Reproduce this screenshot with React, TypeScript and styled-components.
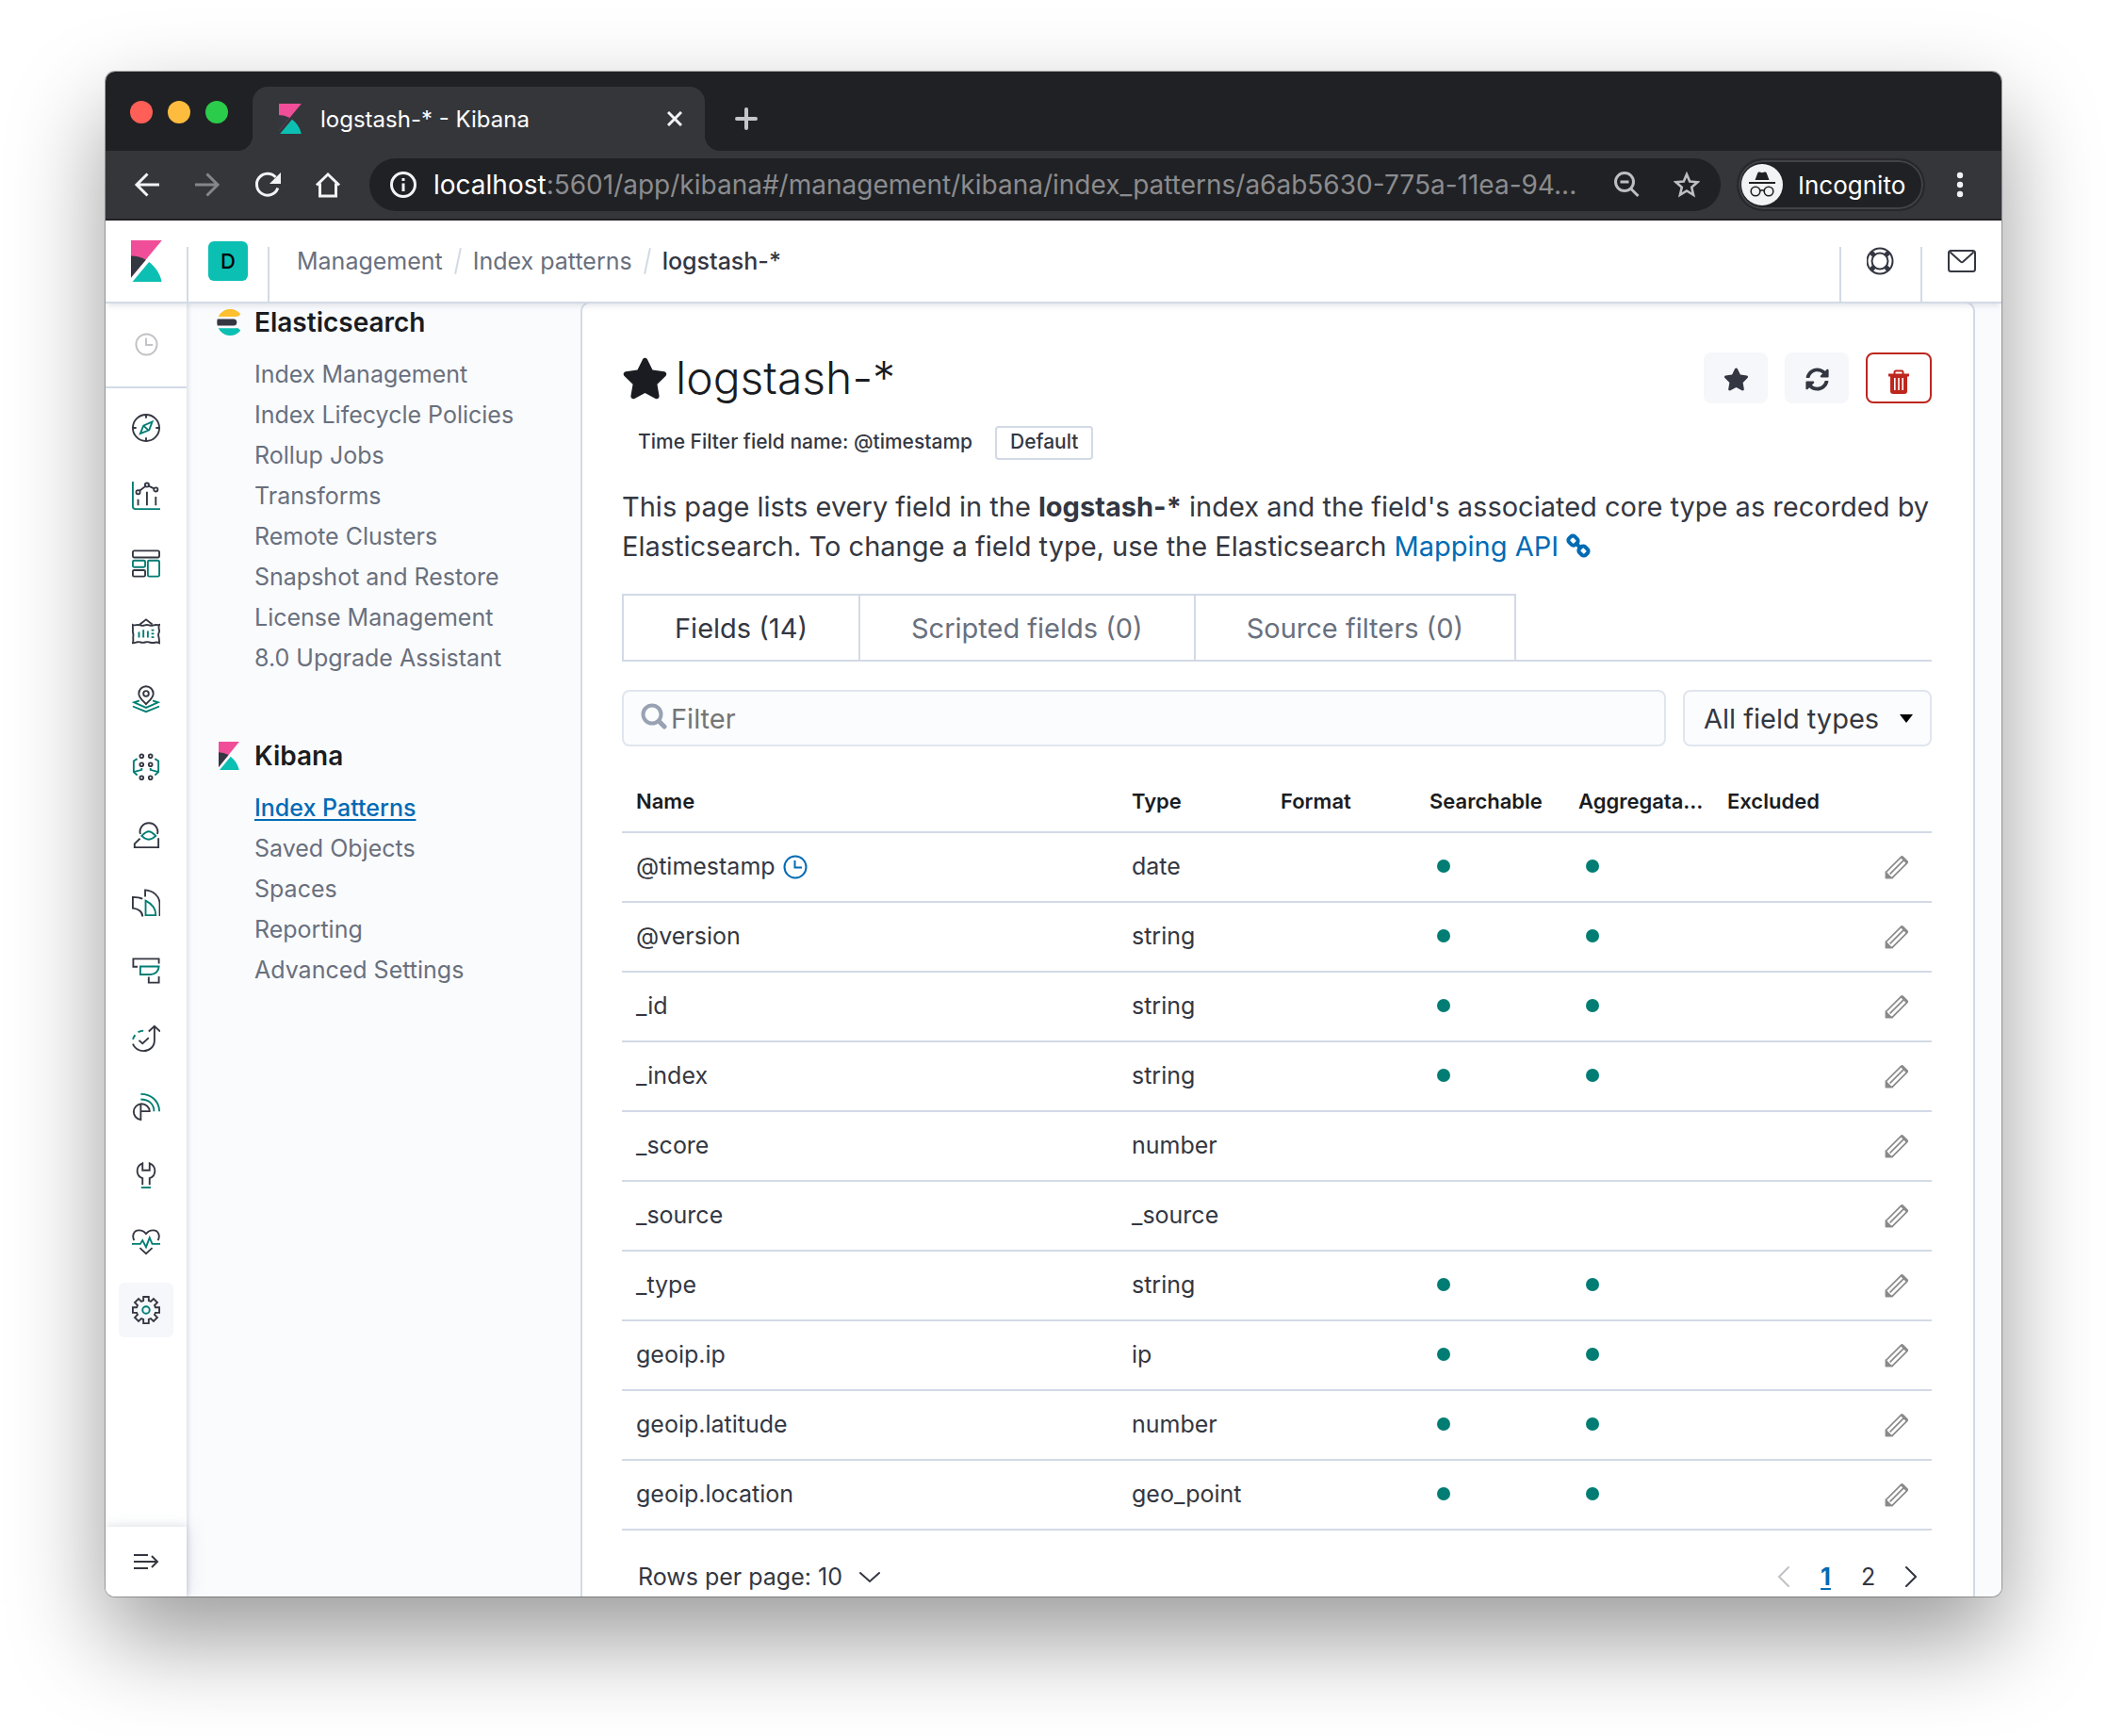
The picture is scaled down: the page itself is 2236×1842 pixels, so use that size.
import React from "react";
import styled, { createGlobalStyle, css } from "styled-components";
import { FaStar, FaSyncAlt } from "react-icons/fa";

const color = {
  ink: "#1a1c21",
  text: "#343741",
  subdued: "#69707d",
  border: "#d3dae6",
  page: "#fafbfd",
  shade: "#f5f7fa",
  teal: "#017d73",
  link: "#006bb4",
  danger: "#bd271e",
  strip: "#202124",
  toolbar: "#35363a",
};

const GlobalStyle = createGlobalStyle`
  *, *::before, *::after { box-sizing: border-box; }
  body {
    margin: 0;
    background: #fff;
    color: ${color.text};
    font-family: Inter, "Liberation Sans", sans-serif;
    font-size: 25px;
  }
  button, input, select { font: inherit; color: inherit; }
  button { padding: 0; border: 0; background: none; cursor: pointer; }
  a { color: inherit; text-decoration: none; }
  ul { margin: 0; padding: 0; list-style: none; }
  svg { display: block; flex: none; }
`;

/* ---------- Browser frame ---------- */

const Desktop = styled.div`
  display: flex;
  height: 100vh;
  padding: 76px 112px 148px;
  overflow: hidden;
`;

const Window = styled.div`
  display: flex;
  flex-direction: column;
  flex: 1;
  min-width: 0;
  overflow: hidden;
  border-radius: 10px;
  background: #fff;
  box-shadow: 0 0 0 1px rgba(0, 0, 0, 0.28), 0 44px 100px rgba(0, 0, 0, 0.4);
`;

const TabStrip = styled.div`
  display: flex;
  align-items: center;
  flex: none;
  height: 84px;
  padding-left: 26px;
  background: ${color.strip};
`;

const Lights = styled.div`
  display: flex;
  gap: 16px;
  margin-right: 26px;
  padding-top: 2px;
`;

const Light = styled.button<{ $fill: string }>`
  width: 24px;
  height: 24px;
  border-radius: 50%;
  background: ${(p) => p.$fill};
`;

const BrowserTab = styled.div`
  position: relative;
  display: flex;
  align-items: center;
  align-self: flex-end;
  gap: 20px;
  width: 480px;
  height: 68px;
  padding: 0 24px 0 28px;
  border-radius: 16px 16px 0 0;
  background: ${color.toolbar};
  color: #fff;
  font-size: 24px;

  &::before,
  &::after {
    content: "";
    position: absolute;
    bottom: 0;
    width: 16px;
    height: 16px;
  }
  &::before {
    right: 100%;
    background: radial-gradient(circle at 0 0, transparent 16px, ${color.toolbar} 16px);
  }
  &::after {
    left: 100%;
    background: radial-gradient(circle at 100% 0, transparent 16px, ${color.toolbar} 16px);
  }
`;

const TabTitle = styled.span`
  flex: 1;
  white-space: nowrap;
`;

const NewTab = styled.button`
  display: flex;
  align-items: center;
  align-self: flex-end;
  height: 68px;
  margin-left: 32px;
  color: #c4c6ca;
`;

const Toolbar = styled.div`
  display: flex;
  align-items: center;
  flex: none;
  height: 74px;
  padding: 0 40px 0 30px;
  border-bottom: 2px solid #232327;
  background: ${color.toolbar};
  color: #f1f3f4;
`;

const NavButtons = styled.div`
  display: flex;
  gap: 36px;
  margin-right: 30px;
`;

const ChromeButton = styled.button<{ $muted?: boolean }>`
  color: ${(p) => (p.$muted ? "#85868a" : "#f1f3f4")};
`;

const AddressBar = styled.div`
  display: flex;
  align-items: center;
  flex: 1;
  min-width: 0;
  height: 56px;
  padding: 0 22px;
  border-radius: 28px;
  background: ${color.strip};
`;

const Address = styled.span`
  flex: 1;
  min-width: 0;
  margin: 0 36px 0 18px;
  overflow: hidden;
  white-space: nowrap;
  color: #8b8c8f;
  font-size: 28px;
`;

const Host = styled.span`
  color: #fff;
`;

const AddressActions = styled.div`
  display: flex;
  gap: 36px;
`;

const Incognito = styled.button`
  display: flex;
  align-items: center;
  gap: 16px;
  width: 200px;
  height: 56px;
  margin: 0 33px 0 17px;
  padding-left: 3px;
  border: 2px solid #28282c;
  border-radius: 28px;
  background: ${color.strip};
  box-shadow: inset 0 0 0 2px #424347;
  color: #fff;
  font-size: 26px;
`;

/* ---------- Kibana chrome ---------- */

const Header = styled.header`
  position: relative;
  z-index: 1;
  display: flex;
  align-items: center;
  flex: none;
  height: 88px;
  border-bottom: 2px solid ${color.border};
  background: #fff;
  box-shadow: 0 4px 6px -2px rgba(152, 162, 179, 0.3);
`;

const HeaderCell = styled.button<{ $wide?: boolean }>`
  display: flex;
  align-items: center;
  justify-content: center;
  width: ${(p) => (p.$wide ? 86 : 84)}px;
  height: 100%;
  color: ${color.text};
`;

const Divider = styled.span`
  align-self: flex-end;
  width: 2px;
  height: 58px;
  background: ${color.border};
`;

const SpaceAvatar = styled.span`
  width: 42px;
  height: 42px;
  border-radius: 6px;
  background: #0cbfb3;
  color: #000;
  font-size: 22px;
  font-weight: 500;
  line-height: 42px;
  text-align: center;
`;

const Breadcrumbs = styled.nav`
  display: flex;
  align-items: center;
  flex: 1;
  gap: 15px;
  padding-left: 29px;
  color: ${color.subdued};
  white-space: nowrap;
`;

const Slash = styled.span`
  width: 2px;
  height: 28px;
  background: ${color.border};
  transform: rotate(12deg);
`;

const CurrentCrumb = styled.span`
  color: ${color.text};
  font-weight: 500;
`;

const Body = styled.div`
  display: flex;
  flex: 1;
  min-height: 0;
  background: ${color.page};
`;

const Rail = styled.nav`
  display: flex;
  flex-direction: column;
  flex: none;
  width: 86px;
  background: #fff;
  box-shadow: 2px 0 4px rgba(152, 162, 179, 0.3);
`;

const RailRecent = styled.button`
  display: flex;
  align-items: center;
  justify-content: center;
  height: 90px;
  padding-bottom: 2px;
  border-bottom: 2px solid ${color.border};
  color: #c2c3c6;
`;

const RailList = styled.ul`
  display: flex;
  flex-direction: column;
  align-items: center;
  gap: 14px;
  padding-top: 13px;
`;

const RailButton = styled.button<{ $active?: boolean }>`
  display: flex;
  align-items: center;
  justify-content: center;
  width: 58px;
  height: 58px;
  border-radius: 6px;
  background: ${(p) => (p.$active ? color.shade : "transparent")};
`;

const RailExpand = styled.button`
  display: flex;
  align-items: center;
  justify-content: center;
  height: 74px;
  margin-top: auto;
  background: #fff;
  box-shadow: 0 -2px 6px rgba(152, 162, 179, 0.15), 4px 0 16px rgba(152, 162, 179, 0.2);
`;

const SideNav = styled.nav`
  display: flex;
  flex-direction: column;
  flex: none;
  gap: 62px;
  width: 418px;
  padding-left: 32px;
`;

const SideHeading = styled.h2`
  display: flex;
  align-items: center;
  gap: 14px;
  margin: 0 0 14px;
  color: ${color.ink};
  font-size: 28px;
  font-weight: 600;
  line-height: 40px;
`;

const LogoSlot = styled.span`
  display: flex;
  justify-content: center;
  width: 26px;
`;

const SideList = styled.ul`
  padding-left: 40px;
`;

const SideLink = styled.a<{ $active?: boolean }>`
  display: block;
  color: ${color.subdued};
  line-height: 43px;
  ${(p) =>
    p.$active &&
    css`
      color: ${color.link};
      font-weight: 500;
      text-decoration: underline;
      text-decoration-thickness: 2px;
      text-underline-offset: 3px;
    `}
`;

/* ---------- Index pattern page ---------- */

const Panel = styled.main`
  flex: 1;
  min-width: 0;
  margin: -2px 28px 0 0;
  padding: 52px 44px 0 42px;
  border: 2px solid ${color.border};
  border-bottom: 0;
  border-radius: 10px 10px 0 0;
  background: #fff;
  overflow: hidden;
`;

const TitleRow = styled.div`
  display: flex;
  align-items: center;
  height: 54px;
  gap: 18px;
`;

const Title = styled.h1`
  display: flex;
  align-items: center;
  flex: 1;
  gap: 8px;
  margin: 0;
  color: ${color.ink};
  font-size: 48px;
  font-weight: 300;
  line-height: 54px;
`;

const IconButton = styled.button<{ $danger?: boolean }>`
  display: flex;
  align-items: center;
  justify-content: center;
  width: 68px;
  height: 54px;
  padding-top: 3px;
  border-radius: 8px;
  background: ${color.shade};
  color: ${color.text};
  ${(p) =>
    p.$danger &&
    css`
      width: 70px;
      padding-top: 8px;
      border: 2px solid ${color.danger};
      background: #fff;
      color: ${color.danger};
    `}
`;

const MetaRow = styled.div`
  display: flex;
  align-items: center;
  gap: 24px;
  margin-top: 24px;
  padding-left: 17px;
  font-size: 21px;
  font-weight: 500;
  line-height: 30px;
`;

const MetaText = styled.span`
  padding-bottom: 2px;
`;

const Badge = styled.span`
  padding: 0 14px 2px;
  border: 2px solid ${color.border};
  border-radius: 4px;
`;

const Intro = styled.p`
  margin: 29px 0;
  font-size: 29px;
  line-height: 42px;
`;

const DocLink = styled.a`
  color: ${color.link};

  svg {
    display: inline-block;
    vertical-align: -2px;
  }
`;

const Tabs = styled.div`
  display: flex;
  height: 72px;
  border-bottom: 2px solid ${color.border};
`;

const TabButton = styled.button<{ $active?: boolean }>`
  padding: 0 54px;
  border-top: 2px solid ${color.border};
  border-right: 2px solid ${color.border};
  color: ${(p) => (p.$active ? color.text : color.subdued)};
  font-size: 29px;

  &:first-child {
    border-left: 2px solid ${color.border};
  }
`;

const Filters = styled.form`
  display: flex;
  gap: 18px;
  margin: 30px 0 24px;
`;

const field = css`
  width: 100%;
  height: 60px;
  border: 2px solid #e0e5ee;
  border-radius: 8px;
  background: #fbfcfd;
  font-size: 29px;
`;

const SearchBox = styled.label`
  position: relative;
  flex: 1;

  svg {
    position: absolute;
    top: 14px;
    left: 20px;
    color: #98a2b3;
  }
`;

const SearchInput = styled.input`
  ${field}
  padding: 0 20px 0 50px;

  &::placeholder {
    color: #757575;
    opacity: 1;
  }
`;

const SelectBox = styled.label`
  position: relative;
  width: 264px;

  svg {
    position: absolute;
    top: 26px;
    right: 20px;
    pointer-events: none;
  }
`;

const TypeSelect = styled.select`
  ${field}
  padding: 0 20px;
  appearance: none;
`;

const Table = styled.table`
  width: 100%;
  border-collapse: separate;
  border-spacing: 0;
  table-layout: fixed;
`;

const HeadCell = styled.th<{ $width?: number }>`
  width: ${(p) => (p.$width ? `${p.$width}px` : "auto")};
  height: 68px;
  padding: 2px 6px 0 15px;
  overflow: hidden;
  border-bottom: 2px solid ${color.border};
  color: ${color.ink};
  font-size: 22px;
  font-weight: 600;
  text-align: left;
  text-overflow: ellipsis;
  white-space: nowrap;
`;

const Cell = styled.td`
  height: 74px;
  padding: 0 14px 2px 15px;
  border-bottom: 2px solid ${color.border};
`;

const FieldName = styled.span`
  display: flex;
  align-items: center;
  gap: 8px;
  color: ${color.text};

  svg {
    margin-top: 2px;
    color: ${color.link};
  }
`;

const Dot = styled.span`
  display: block;
  width: 14px;
  height: 14px;
  margin-left: 8px;
  border-radius: 50%;
  background: ${color.teal};
`;

const EditButton = styled.button`
  display: flex;
  margin: 2px 0 0 8px;
  color: #8a8a8a;
`;

const Footer = styled.div`
  display: flex;
  align-items: center;
  justify-content: space-between;
  height: 98px;
  padding-left: 17px;
`;

const PageSize = styled.button`
  display: flex;
  align-items: center;
  gap: 18px;
`;

const Pages = styled.div`
  display: flex;
  align-items: center;
`;

const PageButton = styled.button<{ $active?: boolean; $muted?: boolean }>`
  display: flex;
  justify-content: center;
  width: 45px;
  opacity: ${(p) => (p.$muted ? 0.3 : 1)};
  ${(p) =>
    p.$active &&
    css`
      color: ${color.link};
      font-weight: 700;
      text-decoration: underline;
      text-decoration-thickness: 2px;
      text-underline-offset: 3px;
    `}
`;

/* ---------- Drawings ---------- */

function Stroke({
  size = 28,
  width = 2,
  box = "0 0 28 28",
  children,
}: {
  size?: number;
  width?: number;
  box?: string;
  children: React.ReactNode;
}) {
  return (
    <svg width={size} height={size} viewBox={box} fill="none" stroke="currentColor" strokeWidth={width} aria-hidden="true">
      {children}
    </svg>
  );
}

function KibanaLogo({ width, height }: { width: number; height: number }) {
  return (
    <svg width={width} height={height} viewBox="4 0 25 32" preserveAspectRatio="none" aria-hidden="true">
      <path fill="#f04e98" d="M4 0v28.8L28.9 0z" />
      <path fill="#343741" d="M4 12v16.8L15.9 15A25 25 0 0 0 4 12" />
      <path fill="#0cbfb3" d="M18.5 16.7 5.2 32h23.5c-1.3-6.200-5-11.600-10.200-15.300" />
    </svg>
  );
}

const ElasticsearchLogo = () => (
  <svg width="26" height="28" viewBox="2 0 29 32" aria-hidden="true">
    <path fill="#343741" d="M2 16c0 1.400.2 2.700.5 4H22a4 4 0 1 0 0-8H2.500A16 16 0 0 0 2 16" />
    <path fill="#fec02e" d="M28.900 7.700A15 15 0 0 0 30.500 6 16 16 0 0 0 3.600 9h21.900a5 5 0 0 0 3.400-1.300" />
    <path fill="#0cbfb3" d="M25.500 23H3.600a16 16 0 0 0 26.900 3 15 15 0 0 0-1.600-1.700 5 5 0 0 0-3.400-1.300" />
  </svg>
);

const ClockIcon = ({ size }: { size: number }) => (
  <Stroke size={size} box="0 0 26 26">
    <circle cx="13" cy="13" r="11.500" />
    <path d="M12.500 6v7.500H20" />
  </Stroke>
);

const LifeRing = () => (
  <Stroke size={30} box="0 0 30 30">
    <circle cx="14" cy="15" r="13.500" />
    <circle cx="14" cy="15" r="8.500" />
    <path strokeWidth="5" d="m4.700 5.700 3.200 3.200M23.300 5.700l-3.200 3.200M4.700 24.300l3.200-3.200M23.300 24.300l-3.200-3.200" />
  </Stroke>
);

const MailIcon = () => (
  <Stroke size={30} box="0 0 30 30">
    <rect x="1" y="4" width="28" height="22" rx="2.500" />
    <path d="m2.500 5.500 11.300 10.200a2 2 0 0 0 2.400 0L27.500 5.500" />
  </Stroke>
);

const TrashIcon = () => (
  <svg width="24" height="26" viewBox="0 0 24 26" aria-hidden="true">
    <path fill="none" stroke="currentColor" strokeWidth="2" d="M7.500 5V3a1.500 1.500 0 0 1 1.500-1.500h6A1.500 1.500 0 0 1 16.500 3v2" />
    <path fill="currentColor" d="M1 4.500h22v3h-2V23a3 3 0 0 1-3 3H6a3 3 0 0 1-3-3V7.500H1z" />
    <path stroke="#fff" strokeWidth="1.600" d="M7.800 9v13M12 9v13M16.200 9v13" />
  </svg>
);

const ChainIcon = () => (
  <Stroke size={26} width={4} box="0 0 26 26">
    <rect x="2.800" y="3.300" width="9.500" height="8.500" rx="3" transform="rotate(45 7.500 7.500)" />
    <rect x="13.700" y="14.300" width="9.500" height="8.500" rx="3" transform="rotate(45 18.500 18.500)" />
    <path d="m9.500 9.500 7 7" />
  </Stroke>
);

const PencilIcon = () => (
  <Stroke size={28} width={1} box="0 0 16 16">
    <path strokeLinejoin="round" d="M1.500 11 10.600 1.900a.7.7 0 0 1 1 0l2.600 2.600a.7.7 0 0 1 0 1L5.200 14.500H1.500zM3.800 12.200l8.400-8.400M10.500 2l3.600 3.600" />
    <path fill="currentColor" d="M1.500 11.500v3h3z" />
  </Stroke>
);

const IncognitoIcon = () => (
  <svg width="44" height="44" viewBox="0 0 44 44" aria-hidden="true">
    <circle cx="22" cy="22" r="22" fill="#f1f3f4" />
    <path fill="#202124" d="M14.500 17 17.300 9.500c.3-1 1.200-1.300 2-1l2.700.8 2.700-.8c.8-.3 1.700 0 2 1L29.500 17zM8 19h28v2H8z" />
    <g fill="none" stroke="#202124" strokeWidth="1.600">
      <circle cx="15" cy="29" r="4.800" />
      <circle cx="29" cy="29" r="4.800" />
      <path d="M19.800 28.500c1.400-1 3-1 4.400 0" />
    </g>
  </svg>
);

/* Outline of a cog with eight square teeth, centred in a 32 unit box. */
const cogPath = (() => {
  const points: string[] = [];
  for (let i = 0; i < 8; i += 1) {
    const a = (i * Math.PI) / 4;
    [
      [10.6, -3],
      [15, -3],
      [15, 3],
      [10.6, 3],
    ].forEach(([r, t]) => {
      const x = 16 + r * Math.cos(a) - t * Math.sin(a);
      const y = 16 + r * Math.sin(a) + t * Math.cos(a);
      points.push(`${x.toFixed(2)} ${y.toFixed(2)}`);
    });
  }
  return `M${points.join("L")}z`;
})();

/* Each app icon is a dark outline and a teal accent in a 32 unit box. */
const apps: { name: string; dark: string; accent: string; active?: boolean }[] = [
  {
    name: "Discover",
    dark: "M31 16a15 15 0 1 1-30 0 15 15 0 1 1 30 0zM16 1v4M16 27v4M1 16h4M27 16h4",
    accent: "M9.500 22.500 13 13.500l10-4.500-3.500 9.500zM13 13.500l5.500 5",
  },
  {
    name: "Visualize",
    dark: "M9.200 12a2.200 2.200 0 1 1-4.400 0 2.200 2.200 0 1 1 4.400 0zM19.200 3.800a2.200 2.200 0 1 1-4.400 0 2.200 2.200 0 1 1 4.400 0zM29.200 9a2.200 2.200 0 1 1-4.400 0 2.200 2.200 0 1 1 4.400 0zM8.700 10.500l6.600-5.300M19 4.900l6 3M7 20v7M17 11.500V27M27 17v10",
    accent: "M1 0v28a3 3 0 0 0 3 3h28",
  },
  {
    name: "Dashboard",
    dark: "M2.500 1.500h27A1.500 1.500 0 0 1 31 3v4.500A1.500 1.500 0 0 1 29.500 9h-27A1.500 1.500 0 0 1 1 7.500V3a1.500 1.500 0 0 1 1.500-1.500zM2.500 23.500h11A1.500 1.500 0 0 1 15 25v4a1.500 1.500 0 0 1-1.500 1.500h-11A1.500 1.500 0 0 1 1 29v-4a1.500 1.500 0 0 1 1.500-1.500z",
    accent: "M2.500 12.500h11A1.500 1.500 0 0 1 15 14v4.500a1.500 1.500 0 0 1-1.500 1.500h-11A1.500 1.500 0 0 1 1 18.500V14a1.500 1.500 0 0 1 1.500-1.500zM19.500 12.500h10A1.500 1.500 0 0 1 31 14v15a1.500 1.500 0 0 1-1.500 1.500h-10A1.500 1.500 0 0 1 18 29V14a1.500 1.500 0 0 1 1.500-1.500z",
  },
  {
    name: "Canvas",
    dark: "M1 8.500c2 1 4 0 6 0s3 1 5 1 3-1 5-1 3 1 5 1 3-1 5-1 2.500.500 4 0c-1.500 3.500 0 5 0 7s-1.500 3-1 5 1 4 1 8.500c-2-1-3-1-5-.500s-3 .500-5 0-3-1-5-.500-3 1-5 .500-3-1-5-.500-3 1-5 1c1-3 0-5 .500-8s-1-4-.500-6-.500-4 0-6.500zM9 8l7-5.500L23 8",
    accent: "M8 16.500V23M13 14v9M18 15.500V23M22 14.500h3M22 18.500h3M22 22.500h3",
  },
  {
    name: "Maps",
    dark: "M16 21.500c-3-3.500-8.200-7-8.200-12a8.200 8.200 0 0 1 16.400 0c0 5-5.200 8.500-8.200 12zM19 9.500a3 3 0 1 1-6 0 3 3 0 1 1 6 0z",
    accent: "M8.500 17.500 2.500 19.500 16 25.500l13.500-6-6-2M1 24l15 6 15-6",
  },
  {
    name: "Machine Learning",
    dark: "M13 3.500a2 2 0 1 1-4 0 2 2 0 1 1 4 0zM23 3.500a2 2 0 1 1-4 0 2 2 0 1 1 4 0zM13 13a2 2 0 1 1-4 0 2 2 0 1 1 4 0zM23 13a2 2 0 1 1-4 0 2 2 0 1 1 4 0zM13 28a2 2 0 1 1-4 0 2 2 0 1 1 4 0zM23 28a2 2 0 1 1-4 0 2 2 0 1 1 4 0z",
    accent: "M6 6.500 2 9v12.500l4 3.500M2 21.500l9-2.500v-2M26 6.500 30 9v12.500L26 25M30 21.500 21 19v-2",
  },
  {
    name: "Metrics",
    dark: "M9.500 15A10 10 0 1 1 28.800 15M9.200 20 3 26v4h27V19.500",
    accent: "M11 17c2-2 5-5 8-5s6 3 8 5c-2 2-5 4-8 4s-6-2-8-4z",
  },
  {
    name: "Logs",
    dark: "M12 11.500C9 10 5 9.500 1 9.500V22c6 .5 11 4 11 9.500M15 9V1.500c9 .5 16.500 7 16.500 16V31",
    accent: "M15.500 13.500V30H27c0-7-4.500-13-11.500-16.500z",
  },
  {
    name: "APM",
    dark: "M6.500 11.500H1.500v-9h29v5.500M19 23v6.500h11.500v-7",
    accent: "M9.500 11.200h21c0 5-4 9-9.500 9H9.500z",
  },
  {
    name: "Uptime",
    dark: "M1 22c2 5 7 8 12 8 7 0 12.500-5 12.500-12V2M19 8l6.500-6L32 8M8 18l4 3.500 7-6.500",
    accent: "M1.200 17a10 10 0 0 1 2.500-5M7 8.700a13 13 0 0 1 6-1.700",
  },
  {
    name: "SIEM",
    dark: "M10 13v18a9 9 0 1 1 10-9.500H10",
    accent: "M10 2c12 0 21 8 21 19.500M10 8c9 0 15 5 15 13.500",
  },
  {
    name: "Dev Tools",
    dark: "M12 28v-7.500C8 19 6 15.500 6 12c0-4 2.500-7 6-8.500v8h8v-8c3.500 1.500 6 4.500 6 8.500 0 3.500-2 7-6 8.500V28",
    accent: "M10.500 31h11",
  },
  {
    name: "Stack Monitoring",
    dark: "M2.500 14C0 9.500 1.500 2.500 8 2.500c4 0 6 1.500 8 4 2-2.500 4-4 8-4 6.500 0 8 7 5.500 11.500M9 22.500l7 6.500 7-6.500",
    accent: "M0 18h9.500l2.500-4 4 7.500L20 11l3 7h9",
  },
  { name: "Management", dark: cogPath, accent: "M20 16a4 4 0 1 1-8 0 4 4 0 1 1 8 0z", active: true },
];

/* ---------- Data ---------- */

const elasticsearchLinks = [
  "Index Management",
  "Index Lifecycle Policies",
  "Rollup Jobs",
  "Transforms",
  "Remote Clusters",
  "Snapshot and Restore",
  "License Management",
  "8.0 Upgrade Assistant",
];

const kibanaLinks = ["Index Patterns", "Saved Objects", "Spaces", "Reporting", "Advanced Settings"];

const fields: { name: string; type: string; indexed: boolean; time?: boolean }[] = [
  { name: "@timestamp", type: "date", indexed: true, time: true },
  { name: "@version", type: "string", indexed: true },
  { name: "_id", type: "string", indexed: true },
  { name: "_index", type: "string", indexed: true },
  { name: "_score", type: "number", indexed: false },
  { name: "_source", type: "_source", indexed: false },
  { name: "_type", type: "string", indexed: true },
  { name: "geoip.ip", type: "ip", indexed: true },
  { name: "geoip.latitude", type: "number", indexed: true },
  { name: "geoip.location", type: "geo_point", indexed: true },
];

/* ---------- Sections ---------- */

function BrowserChrome() {
  return (
    <>
      <TabStrip>
        <Lights>
          <Light $fill="#ff5f57" aria-label="Close window" />
          <Light $fill="#febc3e" aria-label="Minimize window" />
          <Light $fill="#2bcb4b" aria-label="Zoom window" />
        </Lights>
        <BrowserTab>
          <KibanaLogo width={24} height={32} />
          <TabTitle>logstash-* - Kibana</TabTitle>
          <ChromeButton aria-label="Close tab">
            <Stroke size={16} width={3} box="0 0 16 16">
              <path d="m1 1 14 14M15 1 1 15" />
            </Stroke>
          </ChromeButton>
        </BrowserTab>
        <NewTab aria-label="New tab">
          <Stroke size={24} width={4} box="0 0 24 24">
            <path strokeLinecap="round" d="M12 2v20M2 12h20" />
          </Stroke>
        </NewTab>
      </TabStrip>
      <Toolbar>
        <NavButtons>
          <ChromeButton aria-label="Back">
            <Stroke width={3}>
              <path d="M27 14H3M14.500 2.500 3 14l11.500 11.500" />
            </Stroke>
          </ChromeButton>
          <ChromeButton $muted aria-label="Forward">
            <Stroke width={3}>
              <path d="M1 14h24M13.500 2.500 25 14 13.500 25.500" />
            </Stroke>
          </ChromeButton>
          <ChromeButton aria-label="Reload">
            <Stroke width={3}>
              <path d="M24.800 17.500A11.500 11.500 0 1 1 22.500 6" />
              <path fill="currentColor" stroke="none" d="M28 1v12H16z" />
            </Stroke>
          </ChromeButton>
          <ChromeButton aria-label="Home">
            <Stroke width={3}>
              <path d="M2 14.500 14 3l12 11.500M5.500 12.500V26h17V12.500" />
            </Stroke>
          </ChromeButton>
        </NavButtons>
        <AddressBar>
          <Stroke width={3}>
            <circle cx="14" cy="14" r="12.500" />
            <path d="M14 12.500V21M14 7v3" />
          </Stroke>
          <Address>
            <Host>localhost</Host>:5601/app/kibana#/management/kibana/index_patterns/a6ab5630-775a-11ea-94...
          </Address>
          <AddressActions>
            <ChromeButton aria-label="Zoom level">
              <Stroke width={3}>
                <g stroke="#bdbec1">
                  <circle cx="12" cy="11" r="9.500" />
                  <path d="m18.500 18 8 8M7.500 11h9" />
                </g>
              </Stroke>
            </ChromeButton>
            <ChromeButton aria-label="Bookmark">
              <Stroke width={2}>
                <path stroke="#bdbec1" strokeWidth="2.600" d="m14 3 3.200 7.600 8.300.7-6.300 5.400 1.900 8.100L14 20.500l-7.100 4.300 1.900-8.100-6.300-5.400 8.300-.7z" />
              </Stroke>
            </ChromeButton>
          </AddressActions>
        </AddressBar>
        <Incognito>
          <IncognitoIcon />
          Incognito
        </Incognito>
        <ChromeButton aria-label="Browser menu">
          <svg width="8" height="28" viewBox="0 0 8 28" fill="currentColor" aria-hidden="true">
            <circle cx="4" cy="4" r="3.200" />
            <circle cx="4" cy="14" r="3.200" />
            <circle cx="4" cy="24" r="3.200" />
          </svg>
        </ChromeButton>
      </Toolbar>
    </>
  );
}

function KibanaHeader() {
  return (
    <Header>
      <HeaderCell $wide aria-label="Kibana home">
        <KibanaLogo width={33} height={44} />
      </HeaderCell>
      <Divider />
      <HeaderCell aria-label="Default space">
        <SpaceAvatar>D</SpaceAvatar>
      </HeaderCell>
      <Divider />
      <Breadcrumbs aria-label="Breadcrumbs">
        <a href="#management">Management</a>
        <Slash />
        <a href="#index-patterns">Index patterns</a>
        <Slash />
        <CurrentCrumb>logstash-*</CurrentCrumb>
      </Breadcrumbs>
      <Divider />
      <HeaderCell aria-label="Help">
        <LifeRing />
      </HeaderCell>
      <Divider />
      <HeaderCell aria-label="Newsfeed">
        <MailIcon />
      </HeaderCell>
    </Header>
  );
}

function AppRail() {
  return (
    <Rail aria-label="Apps">
      <RailRecent aria-label="Recently viewed">
        <ClockIcon size={25} />
      </RailRecent>
      <RailList>
        {apps.map((app) => (
          <li key={app.name}>
            <RailButton $active={app.active} aria-label={app.name}>
              <Stroke size={30} box="0 0 32 32">
                <path d={app.dark} />
                <path stroke={color.teal} d={app.accent} />
              </Stroke>
            </RailButton>
          </li>
        ))}
      </RailList>
      <RailExpand aria-label="Expand navigation">
        <Stroke size={28}>
          <path d="M1 7h15M1 14h25M1 21h15M20 8l6 6-6 6" />
        </Stroke>
      </RailExpand>
    </Rail>
  );
}

function ManagementNav() {
  return (
    <SideNav aria-label="Management">
      <section>
        <SideHeading>
          <LogoSlot>
            <ElasticsearchLogo />
          </LogoSlot>
          Elasticsearch
        </SideHeading>
        <SideList>
          {elasticsearchLinks.map((label) => (
            <li key={label}>
              <SideLink href="#elasticsearch">{label}</SideLink>
            </li>
          ))}
        </SideList>
      </section>
      <section>
        <SideHeading>
          <LogoSlot>
            <KibanaLogo width={22} height={30} />
          </LogoSlot>
          Kibana
        </SideHeading>
        <SideList>
          {kibanaLinks.map((label, i) => (
            <li key={label}>
              <SideLink href="#kibana" $active={i === 0}>
                {label}
              </SideLink>
            </li>
          ))}
        </SideList>
      </section>
    </SideNav>
  );
}

function FieldsTable() {
  return (
    <Table>
      <thead>
        <tr>
          <HeadCell>Name</HeadCell>
          <HeadCell $width={158}>Type</HeadCell>
          <HeadCell $width={158}>Format</HeadCell>
          <HeadCell $width={158}>Searchable</HeadCell>
          <HeadCell $width={158}>Aggregatable</HeadCell>
          <HeadCell $width={158}>Excluded</HeadCell>
          <HeadCell $width={74} aria-label="Actions" />
        </tr>
      </thead>
      <tbody>
        {fields.map((f) => (
          <tr key={f.name}>
            <Cell>
              <FieldName>
                {f.name}
                {f.time && <ClockIcon size={26} />}
              </FieldName>
            </Cell>
            <Cell>{f.type}</Cell>
            <Cell />
            <Cell>{f.indexed && <Dot />}</Cell>
            <Cell>{f.indexed && <Dot />}</Cell>
            <Cell />
            <Cell>
              <EditButton aria-label={`Edit ${f.name}`}>
                <PencilIcon />
              </EditButton>
            </Cell>
          </tr>
        ))}
      </tbody>
    </Table>
  );
}

function IndexPattern() {
  return (
    <Panel>
      <TitleRow>
        <Title>
          <FaStar size={49} />
          logstash-*
        </Title>
        <IconButton aria-label="Set as default index">
          <FaStar size={27} />
        </IconButton>
        <IconButton aria-label="Refresh field list">
          <FaSyncAlt size={25} />
        </IconButton>
        <IconButton $danger aria-label="Remove index pattern">
          <TrashIcon />
        </IconButton>
      </TitleRow>
      <MetaRow>
        <MetaText>Time Filter field name: @timestamp</MetaText>
        <Badge>Default</Badge>
      </MetaRow>
      <Intro>
        This page lists every field in the <strong>logstash-*</strong> index and the field's associated core type as
        recorded by Elasticsearch. To change a field type, use the Elasticsearch{" "}
        <DocLink href="#mapping-api">
          Mapping API <ChainIcon />
        </DocLink>
      </Intro>
      <Tabs role="tablist">
        <TabButton role="tab" aria-selected="true" $active>
          Fields (14)
        </TabButton>
        <TabButton role="tab" aria-selected="false">
          Scripted fields (0)
        </TabButton>
        <TabButton role="tab" aria-selected="false">
          Source filters (0)
        </TabButton>
      </Tabs>
      <Filters>
        <SearchBox>
          <Stroke size={28} width={4}>
            <circle cx="12" cy="12" r="9.500" />
            <path strokeLinecap="round" strokeWidth="5" d="m19.500 19.500 5.500 5.500" />
          </Stroke>
          <SearchInput type="text" placeholder="Filter" aria-label="Filter" />
        </SearchBox>
        <SelectBox>
          <TypeSelect aria-label="Field types" defaultValue="all">
            <option value="all">All field types</option>
          </TypeSelect>
          <svg width="14" height="9" viewBox="0 0 14 9" aria-hidden="true">
            <path fill="#000" d="M0 0h14L7 9z" />
          </svg>
        </SelectBox>
      </Filters>
      <FieldsTable />
      <Footer>
        <PageSize>
          Rows per page: 10
          <Stroke size={22} box="0 0 22 22">
            <path strokeLinecap="round" d="m1 7 10 9 10-9" />
          </Stroke>
        </PageSize>
        <Pages>
          <PageButton $muted aria-label="Previous page">
            <Stroke size={22} box="0 0 22 22">
              <path strokeLinecap="round" d="M16 1 6 11l10 10" />
            </Stroke>
          </PageButton>
          <PageButton $active>1</PageButton>
          <PageButton>2</PageButton>
          <PageButton aria-label="Next page">
            <Stroke size={22} box="0 0 22 22">
              <path strokeLinecap="round" d="m6 1 10 10L6 21" />
            </Stroke>
          </PageButton>
        </Pages>
      </Footer>
    </Panel>
  );
}

export default function App() {
  return (
    <>
      <GlobalStyle />
      <Desktop>
        <Window>
          <BrowserChrome />
          <KibanaHeader />
          <Body>
            <AppRail />
            <ManagementNav />
            <IndexPattern />
          </Body>
        </Window>
      </Desktop>
    </>
  );
}
